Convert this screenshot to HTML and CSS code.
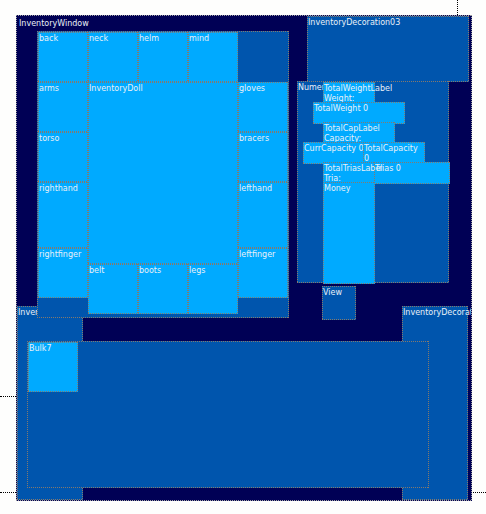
FILE: index.html
```
<!DOCTYPE html>
<html lang="en">
<head>
<meta charset="utf-8">
<title>InventoryWindow</title>
<link rel="stylesheet" href="styles.css">
</head>
<body>
<main class="canvas">
  <i class="guide guide-top"></i>
  <i class="guide guide-left-upper"></i>
  <i class="guide guide-left-lower"></i>
  <i class="guide guide-right"></i>
  <section class="window">
    <h1 class="title">InventoryWindow</h1>
    <div class="widget group decoration-left">InventoryDecoration01</div>
    <div class="widget group decoration-right">InventoryDecoration02</div>
    <div class="widget group decoration-top">InventoryDecoration03</div>

    <div class="widget group equipment">
      <div class="slot">back</div>
      <div class="slot">neck</div>
      <div class="slot">helm</div>
      <div class="slot">mind</div>
      <div class="slot arms">arms</div>
      <div class="slot doll">InventoryDoll</div>
      <div class="slot gloves">gloves</div>
      <div class="slot torso">torso</div>
      <div class="slot bracers">bracers</div>
      <div class="slot righthand">righthand</div>
      <div class="slot lefthand">lefthand</div>
      <div class="slot rightfinger">rightfinger</div>
      <div class="slot leftfinger">leftfinger</div>
      <div class="slot belt">belt</div>
      <div class="slot boots">boots</div>
      <div class="slot legs">legs</div>
    </div>

    <div class="widget group numeric">Numeric
      <div class="widget field weight-label">TotalWeightLabel<br>Weight:</div>
      <div class="widget field weight">TotalWeight 0</div>
      <div class="widget field cap-label">TotalCapLabel<br>Capacity:</div>
      <div class="widget field curr-cap">CurrCapacity 0</div>
      <div class="widget field total-cap">TotalCapacity<br>0</div>
      <div class="widget field trias">Trias 0</div>
      <div class="widget field trias-label">TotalTriasLabel<br>Tria:</div>
      <div class="widget field money">Money</div>
    </div>

    <div class="widget group view">View</div>
    <div class="widget group bulk">
      <div class="slot bulk-slot">Bulk7</div>
    </div>
  </section>
</main>
</body>
</html>
```
FILE: styles.css
```
* {
  box-sizing: border-box;
}

body {
  margin: 0;
  background: #fefefd;
  color: #e8f0f8;
  font: 8px/10px "DejaVu Sans", sans-serif;
}

.canvas {
  position: relative;
  display: flex;
  min-height: 100vh;
  padding: 15px 14px 13px 16px;
}

/* One-pixel dotted frames, drawn along the four edges of a box. */
.window,
.widget,
.slot {
  --dot: #85796d;
  --dots-x: repeating-linear-gradient(90deg, var(--dot) 0 1px, transparent 1px 2px);
  --dots-y: repeating-linear-gradient(180deg, var(--dot) 0 1px, transparent 1px 2px);
  border: 1px solid transparent;
  background-image: var(--dots-x), var(--dots-x), var(--dots-y), var(--dots-y);
  background-origin: border-box;
  background-position: top, bottom, left, right;
  background-repeat: no-repeat;
  background-size: 100% 1px, 100% 1px, 1px 100%, 1px 100%;
}

.window {
  --dot: #a0a0a0;
  position: relative;
  flex: 1;
  overflow: hidden;
  padding: 3px 2px;
  background-color: #000055;
}

.title {
  margin: 0;
  font: inherit;
}

.widget,
.slot {
  padding-top: 1px;
  white-space: nowrap;
}

.widget {
  position: absolute;
}

.group {
  background-color: #0055ad;
}

.slot,
.field {
  background-color: #00aaff;
}

.decoration-left {
  left: 0;
  bottom: 0;
  width: 66px;
  height: 194px;
}

.decoration-right {
  right: 3px;
  bottom: 0;
  width: 66px;
  height: 194px;
}

.decoration-top {
  top: 0;
  right: 2px;
  width: 162px;
  height: 66px;
}

.equipment {
  left: 20px;
  top: 15px;
  display: grid;
  grid-template-columns: repeat(5, 50px);
  grid-template-rows: 50px 50px 50px 66px 16px 34px 16px;
  padding: 0 0 3px;
}

.arms { grid-area: 2 / 1; }
.doll { grid-area: 2 / 2 / 6 / 5; }
.gloves { grid-area: 2 / 5; }
.torso { grid-area: 3 / 1; }
.bracers { grid-area: 3 / 5; }
.righthand { grid-area: 4 / 1; }
.lefthand { grid-area: 4 / 5; }
.rightfinger { grid-area: 5 / 1 / 7 / 2; }
.leftfinger { grid-area: 5 / 5 / 7 / 6; }
.belt { grid-area: 6 / 2 / 8 / 3; }
.boots { grid-area: 6 / 3 / 8 / 4; }
.legs { grid-area: 6 / 4 / 8 / 5; }

.numeric {
  left: 280px;
  top: 65px;
  width: 152px;
  height: 202px;
}

.field {
  height: 22px;
}

.weight-label { left: 25px; top: 0; width: 52px; }
.weight { left: 15px; top: 20px; width: 92px; }
.cap-label { left: 25px; top: 40px; width: 72px; }
.curr-cap { left: 5px; top: 60px; width: 62px; }
.total-cap { left: 65px; top: 60px; width: 62px; }
.trias-label { left: 25px; top: 80px; width: 52px; }
.trias { left: 76px; top: 80px; width: 76px; }
.money { left: 25px; top: 100px; width: 52px; height: 102px; }

.view {
  left: 305px;
  top: 270px;
  width: 34px;
  height: 34px;
}

.bulk {
  left: 10px;
  right: 42px;
  bottom: 12px;
  height: 147px;
  padding: 0;
}

.bulk-slot {
  width: 50px;
  height: 50px;
}

.guide {
  position: absolute;
  border: 0 dotted #000;
}

.guide-top {
  top: 0;
  right: 28px;
  height: 15px;
  border-left-width: 1px;
}

.guide-left-upper,
.guide-left-lower {
  left: 0;
  width: 16px;
  border-top-width: 1px;
}

.guide-left-upper { bottom: 117px; }
.guide-left-lower { bottom: 21px; }

.guide-right {
  right: 0;
  bottom: 21px;
  width: 13px;
  border-top-width: 1px;
}
```
